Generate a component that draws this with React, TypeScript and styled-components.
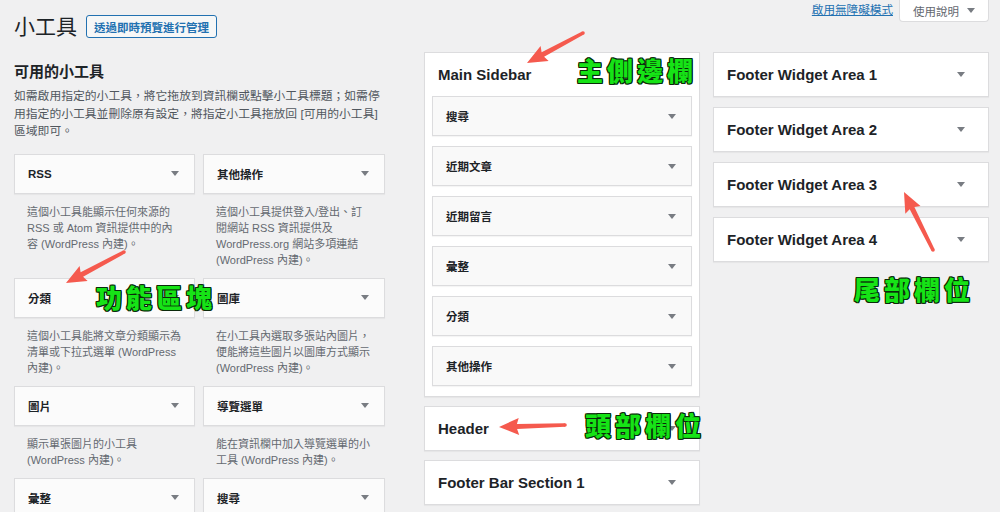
import React from 'react'
import styled, { createGlobalStyle } from 'styled-components'

const GlobalStyle = createGlobalStyle`
  html, body { margin: 0; padding: 0; background: #f0f0f1; }
  body {
    font-family: "Liberation Sans", "Noto Sans CJK TC", sans-serif;
    color: #1d2327;
    overflow: hidden;
  }
  #root { width: 1000px; height: 512px; }
`

type Widget = { title: string; desc: string[] }

const available: Widget[] = [
  { title: 'RSS', desc: ['這個小工具能顯示任何來源的', 'RSS 或 Atom 資訊提供中的內', '容 (WordPress 內建)。'] },
  { title: '其他操作', desc: ['這個小工具提供登入/登出、訂', '閱網站 RSS 資訊提供及', 'WordPress.org 網站多項連結', '(WordPress 內建)。'] },
  { title: '分類', desc: ['這個小工具能將文章分類顯示為', '清單或下拉式選單 (WordPress', '內建)。'] },
  { title: '圖庫', desc: ['在小工具內選取多張站內圖片，', '便能將這些圖片以圖庫方式顯示', '(WordPress 內建)。'] },
  { title: '圖片', desc: ['顯示單張圖片的小工具', '(WordPress 內建)。'] },
  { title: '導覽選單', desc: ['能在資訊欄中加入導覽選單的小', '工具 (WordPress 內建)。'] },
  // 最後一列只露出標題列，說明在畫面外
  { title: '彙整', desc: [] },
  { title: '搜尋', desc: [] },
]

const mainSidebar = ['搜尋', '近期文章', '近期留言', '彙整', '分類', '其他操作']
const footerAreas = ['Footer Widget Area 1', 'Footer Widget Area 2', 'Footer Widget Area 3', 'Footer Widget Area 4']

// 標註用的紅色箭頭 (tail -> tip)
const arrows = [
  [124, 252, 66, 283],
  [583, 33, 527, 63],
  [565, 425, 499, 427],
  [933, 250, 904, 192],
]

const labels = [
  { text: '功能區塊', top: 283, left: 96 },
  { text: '主側邊欄', top: 56, left: 577 },
  { text: '頭部欄位', top: 411, left: 585 },
  { text: '尾部欄位', top: 275, left: 854 },
]

function arrowPoints(x1: number, y1: number, x2: number, y2: number) {
  const dx = x2 - x1
  const dy = y2 - y1
  const len = Math.hypot(dx, dy)
  const ux = dx / len
  const uy = dy / len
  const px = -uy
  const py = ux
  const headLen = 18
  const headW = 8.5
  const neckW = 2.6
  const tailW = 1.8
  const bx = x2 - ux * headLen
  const by = y2 - uy * headLen
  const pts = [
    [x1 + px * tailW, y1 + py * tailW],
    [bx + px * neckW, by + py * neckW],
    [bx - ux * 2 + px * headW, by - uy * 2 + py * headW],
    [x2, y2],
    [bx - ux * 2 - px * headW, by - uy * 2 - py * headW],
    [bx - px * neckW, by - py * neckW],
    [x1 - px * tailW, y1 - py * tailW],
  ]
  return pts.map(p => p.map(n => n.toFixed(1)).join(',')).join(' ')
}

export default function App() {
  return (
    <Page>
      <GlobalStyle />
      <TopRow>
        <TitleGroup>
          <PageTitle>小工具</PageTitle>
          <ManageButton>透過即時預覽進行管理</ManageButton>
        </TitleGroup>
        <MetaLinks>
          <A11yLink>啟用無障礙模式</A11yLink>
          <HelpTab>
            使用說明 <Caret />
          </HelpTab>
        </MetaLinks>
      </TopRow>

      <Columns>
        <LeftCol>
          <SectionTitle>可用的小工具</SectionTitle>
          <Intro>
            如需啟用指定的小工具，將它拖放到資訊欄或點擊小工具標題；如需停
            <br />
            用指定的小工具並刪除原有設定，將指定小工具拖放回 [可用的小工具]
            <br />
            區域即可。
          </Intro>
          <WidgetGrid>
            {available.map(w => (
              <WidgetItem key={w.title}>
                <WidgetBar>
                  <span>{w.title}</span>
                  <Caret />
                </WidgetBar>
                {w.desc.length > 0 && (
                  <WidgetDesc>
                    {w.desc.map(line => (
                      <div key={line}>{line}</div>
                    ))}
                  </WidgetDesc>
                )}
              </WidgetItem>
            ))}
          </WidgetGrid>
        </LeftCol>

        <MidCol>
          <Panel>
            <PanelHead>Main Sidebar</PanelHead>
            <PanelBody>
              {mainSidebar.map(t => (
                <WidgetBar key={t} $inner>
                  <span>{t}</span>
                  <Caret />
                </WidgetBar>
              ))}
            </PanelBody>
          </Panel>
          <Panel>
            <PanelHead>
              Header <Caret />
            </PanelHead>
          </Panel>
          <Panel>
            <PanelHead>
              Footer Bar Section 1 <Caret />
            </PanelHead>
          </Panel>
        </MidCol>

        <RightCol>
          {footerAreas.map(t => (
            <Panel key={t}>
              <PanelHead>
                {t} <Caret />
              </PanelHead>
            </Panel>
          ))}
        </RightCol>
      </Columns>

      <Overlay viewBox="0 0 1000 512">
        {arrows.map(([x1, y1, x2, y2], i) => (
          <g key={i} fill="#f55a4e">
            <polygon points={arrowPoints(x1, y1, x2, y2)} />
            <circle cx={x1} cy={y1} r={1.8} />
          </g>
        ))}
      </Overlay>
      {labels.map(l => (
        <Annotation key={l.text} $top={l.top} $left={l.left}>
          {l.text}
        </Annotation>
      ))}
    </Page>
  )
}

const Page = styled.div`
  position: relative;
  width: 1000px;
  height: 512px;
  padding: 0 11px 0 14px;
  box-sizing: border-box;
  overflow: hidden;
`

const TopRow = styled.div`
  display: flex;
  justify-content: space-between;
  align-items: flex-start;
  height: 52px;
`

const TitleGroup = styled.div`
  display: flex;
  align-items: center;
  gap: 9px;
  margin-top: 15px;
`

const PageTitle = styled.h1`
  margin: 0;
  font-size: 21px;
  line-height: 23px;
  font-weight: 400;
  color: #1d2327;
`

const ManageButton = styled.div`
  display: flex;
  align-items: center;
  height: 23px;
  padding: 0 7px;
  box-sizing: border-box;
  border: 1px solid #2271b1;
  border-radius: 3px;
  background: #f6f7f7;
  color: #2271b1;
  font-size: 11.5px;
  font-weight: 700;
`

const MetaLinks = styled.div`
  display: flex;
  align-items: flex-start;
  gap: 6px;
`

const A11yLink = styled.a`
  margin-top: 3px;
  font-size: 11.6px;
  line-height: 14px;
  color: #2271b1;
  text-decoration: underline;
`

const HelpTab = styled.div`
  display: flex;
  align-items: center;
  justify-content: center;
  gap: 8px;
  width: 90px;
  height: 22px;
  box-sizing: border-box;
  background: #fff;
  border: 1px solid #dcdcde;
  border-top: none;
  border-radius: 0 0 4px 4px;
  color: #646970;
  font-size: 11.5px;
`

const Caret = styled.i`
  display: block;
  width: 0;
  height: 0;
  border-left: 4px solid transparent;
  border-right: 4px solid transparent;
  border-top: 5px solid #787c82;
  flex: none;
`

const Columns = styled.div`
  display: flex;
  align-items: flex-start;
`

const LeftCol = styled.div`
  width: 371px;
  margin-right: 39px;
`

const SectionTitle = styled.h2`
  margin: 10px 0 6px;
  font-size: 15px;
  line-height: 20px;
  font-weight: 700;
  color: #1d2327;
`

const Intro = styled.p`
  margin: 0 0 13px;
  font-size: 11.8px;
  line-height: 17.5px;
  color: #50575e;
  white-space: nowrap;
`

const WidgetGrid = styled.div`
  display: grid;
  grid-template-columns: 181px 182px;
  column-gap: 8px;
`

const WidgetItem = styled.div`
  display: flex;
  flex-direction: column;
`

const WidgetBar = styled.div<{ $inner?: boolean }>`
  display: flex;
  align-items: center;
  justify-content: space-between;
  height: 40px;
  box-sizing: border-box;
  padding: 0 15px 0 13px;
  border: 1px solid #dcdcde;
  background: ${p => (p.$inner ? '#f9f9f9' : '#fbfbfb')};
  box-shadow: 0 1px 1px rgba(0, 0, 0, 0.04);
  font-size: 11.5px;
  font-weight: 700;
  color: #1d2327;
`

const WidgetDesc = styled.div`
  padding: 10px 13px;
  font-size: 11px;
  line-height: 16px;
  color: #646970;
  white-space: nowrap;
`

const MidCol = styled.div`
  width: 276px;
  margin-right: 13px;
  display: flex;
  flex-direction: column;
  gap: 9px;
`

const RightCol = styled.div`
  width: 276px;
  display: flex;
  flex-direction: column;
  gap: 10px;
`

const Panel = styled.div`
  background: #fff;
  border: 1px solid #dcdcde;
  box-shadow: 0 1px 1px rgba(0, 0, 0, 0.04);
`

const PanelHead = styled.div`
  display: flex;
  align-items: center;
  justify-content: space-between;
  height: 43px;
  padding: 0 23px 0 13px;
  font-size: 15px;
  font-weight: 700;
  color: #1d2327;
`

const PanelBody = styled.div`
  display: flex;
  flex-direction: column;
  gap: 10px;
  padding: 0 7px 10px;
`

const Overlay = styled.svg`
  position: absolute;
  left: 0;
  top: 0;
  width: 1000px;
  height: 512px;
  pointer-events: none;
`

const Annotation = styled.div<{ $top: number; $left: number }>`
  position: absolute;
  top: ${p => p.$top}px;
  left: ${p => p.$left}px;
  font-family: "Noto Sans CJK TC", sans-serif;
  font-size: 26px;
  line-height: 28px;
  font-weight: 900;
  letter-spacing: 4px;
  white-space: nowrap;
  color: #16e316;
  text-shadow:
    1px 0 0 #0b2a0b, -1px 0 0 #0b2a0b, 0 1px 0 #0b2a0b, 0 -1px 0 #0b2a0b,
    1px 1px 0 #0b2a0b, -1px -1px 0 #0b2a0b, 1px -1px 0 #0b2a0b, -1px 1px 0 #0b2a0b;
`
